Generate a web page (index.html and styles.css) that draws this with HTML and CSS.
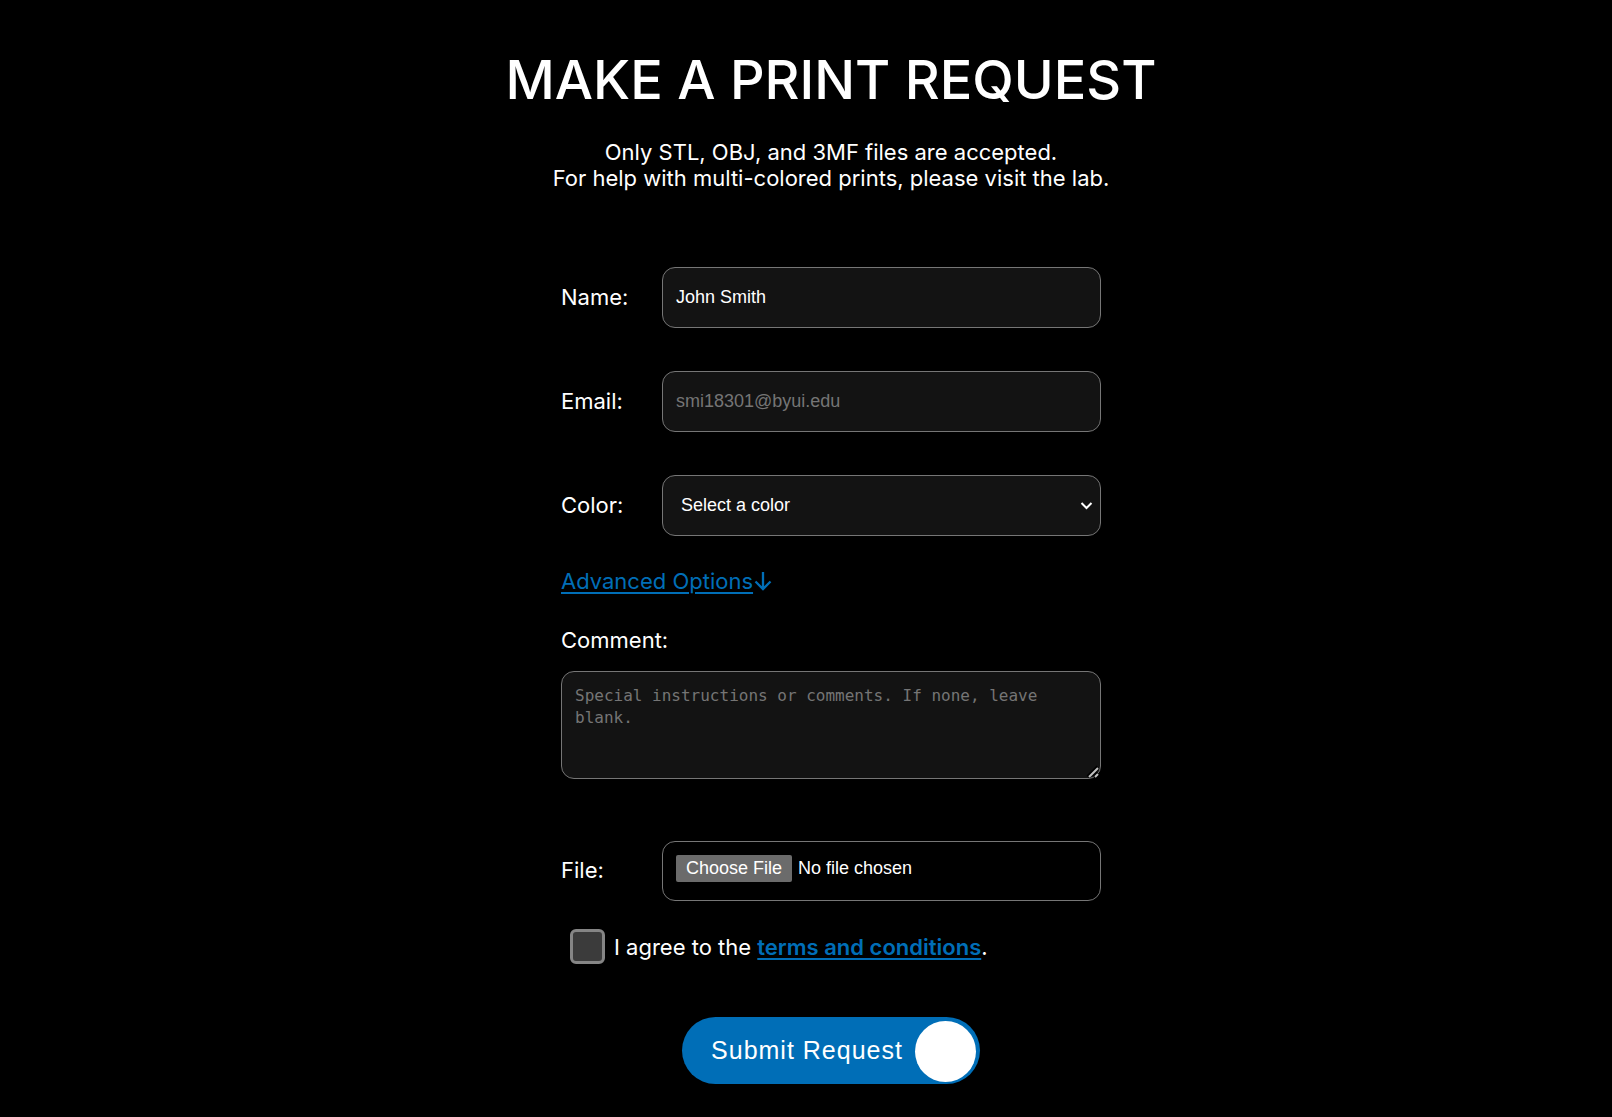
FILE: index.html
```html
<!DOCTYPE html>
<html lang="en">
<head>
<meta charset="utf-8">
<meta name="viewport" content="width=device-width, initial-scale=1">
<title>Make a Print Request</title>
<link rel="stylesheet" href="styles.css">
</head>
<body>
<main class="page">
  <h1 class="title">MAKE A PRINT REQUEST</h1>
  <p class="intro">Only STL, OBJ, and 3MF files are accepted.<br>For help with multi-colored prints, please visit the lab.</p>
  <form class="form">
    <div class="row">
      <label for="name">Name:</label>
      <input class="field" id="name" type="text" value="John Smith">
    </div>
    <div class="row">
      <label for="email">Email:</label>
      <input class="field" id="email" type="email" placeholder="smi18301@byui.edu">
    </div>
    <div class="row">
      <label for="color">Color:</label>
      <div class="select">
        <select class="field" id="color">
          <option>Select a color</option>
          <option>Black</option>
          <option>White</option>
        </select>
        <svg class="chevron" width="14" height="10" viewBox="0 0 14 10" fill="none" stroke="currentColor" stroke-width="2" aria-hidden="true"><path d="M1.500 2l5 5 5-5"/></svg>
      </div>
    </div>
    <div class="advanced">
      <a class="link" href="#advanced">Advanced Options</a>
      <svg class="arrow" width="18" height="20" viewBox="0 0 18 20" fill="none" stroke="currentColor" stroke-width="2.300" aria-hidden="true"><path d="M9 1v17M1.500 10.500l7.500 7.500 7.500-7.500"/></svg>
    </div>
    <div class="comment">
      <label for="comment">Comment:</label>
      <textarea class="field area" id="comment" placeholder="Special instructions or comments. If none, leave blank."></textarea>
    </div>
    <div class="row">
      <label for="file">File:</label>
      <input class="field file" id="file" type="file">
    </div>
    <div class="agree">
      <input class="check" id="agree" type="checkbox">
      <label for="agree">I agree to the <a class="link strong" href="#terms">terms and conditions</a>.</label>
    </div>
    <button class="submit" type="submit">Submit Request<span class="knob"></span></button>
  </form>
</main>
</body>
</html>
```
FILE: styles.css
```css
* {
  box-sizing: border-box;
}

body {
  margin: 0;
  background: #000;
  color: #fff;
  font: 22px/26px Inter, sans-serif;
}

.page {
  display: flex;
  flex-direction: column;
  align-items: center;
  margin-left: 50px;
  padding: 46px 24px 32px;
}

.title {
  margin: 0 0 25px;
  font-size: 54px;
  line-height: 68px;
  font-weight: 500;
  text-align: center;
}

.intro {
  margin: 0 0 76px;
  text-align: center;
}

.form {
  display: flex;
  flex-direction: column;
  width: 100%;
  max-width: 540px;
}

.row {
  display: grid;
  grid-template-columns: 101px 1fr;
  align-items: center;
  margin-bottom: 43px;
}

.row label {
  padding-bottom: 2px;
}

.field {
  display: block;
  width: 100%;
  min-width: 0;
  height: 61px;
  margin: 0;
  padding: 12px 13px;
  border: 1px solid #767676;
  border-radius: 13px;
  background: #131313;
  color: #fff;
  font: 18px "Liberation Sans", Arial, sans-serif;
}

.select {
  position: relative;
}

.select .field {
  appearance: none;
  padding: 10px 28px 12px 18px;
}

.chevron {
  position: absolute;
  right: 7px;
  top: 26px;
  pointer-events: none;
}

.field::placeholder {
  color: #757575;
}

.link,
.arrow {
  color: #006eb7;
}

.link {
  text-decoration-thickness: 2px;
  text-underline-offset: 3px;
}

.strong {
  font-weight: 600;
}

.advanced {
  display: flex;
  align-items: center;
  gap: 1px;
  margin: -11px 0 33px;
}

.comment {
  display: flex;
  flex-direction: column;
  gap: 18px;
  margin-bottom: 62px;
}

.comment .area {
  height: 108px;
  padding: 13px;
  font: 16px/22px "DejaVu Sans Mono", monospace;
  resize: both;
}

.area::-webkit-resizer {
  background: url("data:image/svg+xml,%3Csvg xmlns='http://www.w3.org/2000/svg' width='15' height='15' fill='none'%3E%3Cpath d='M3 14L13 4M9 14l4-4' stroke='%23000' stroke-width='4'/%3E%3Cpath d='M4 14l9-9M10 14l3-3' stroke='%23c0c0c0' stroke-width='2'/%3E%3C/svg%3E") no-repeat right bottom;
}

.file {
  height: 60px;
  padding: 13px;
  background: transparent;
}

.file::file-selector-button {
  height: 27px;
  margin: 0 6px 0 0;
  padding: 0 10px;
  border: 0;
  border-radius: 2px;
  background: #6b6b6b;
  color: #fff;
  font: inherit;
}

.agree {
  display: flex;
  align-items: center;
  gap: 9px;
  margin: -15px 0 53px 9px;
}

.check {
  appearance: none;
  width: 35px;
  height: 35px;
  margin: 0;
  border: 3px solid #858585;
  border-radius: 6px;
  background: #3b3b3b;
}

.submit {
  display: flex;
  align-items: center;
  align-self: center;
  gap: 12px;
  height: 67px;
  padding: 0 4px 0 29px;
  border: 0;
  border-radius: 34px;
  background: #006eb7;
  color: #fff;
  font: 25px "Liberation Sans", Arial, sans-serif;
  letter-spacing: 1px;
}

.knob {
  width: 61px;
  height: 61px;
  margin-top: 2px;
  border-radius: 50%;
  background: #fff;
}
```
